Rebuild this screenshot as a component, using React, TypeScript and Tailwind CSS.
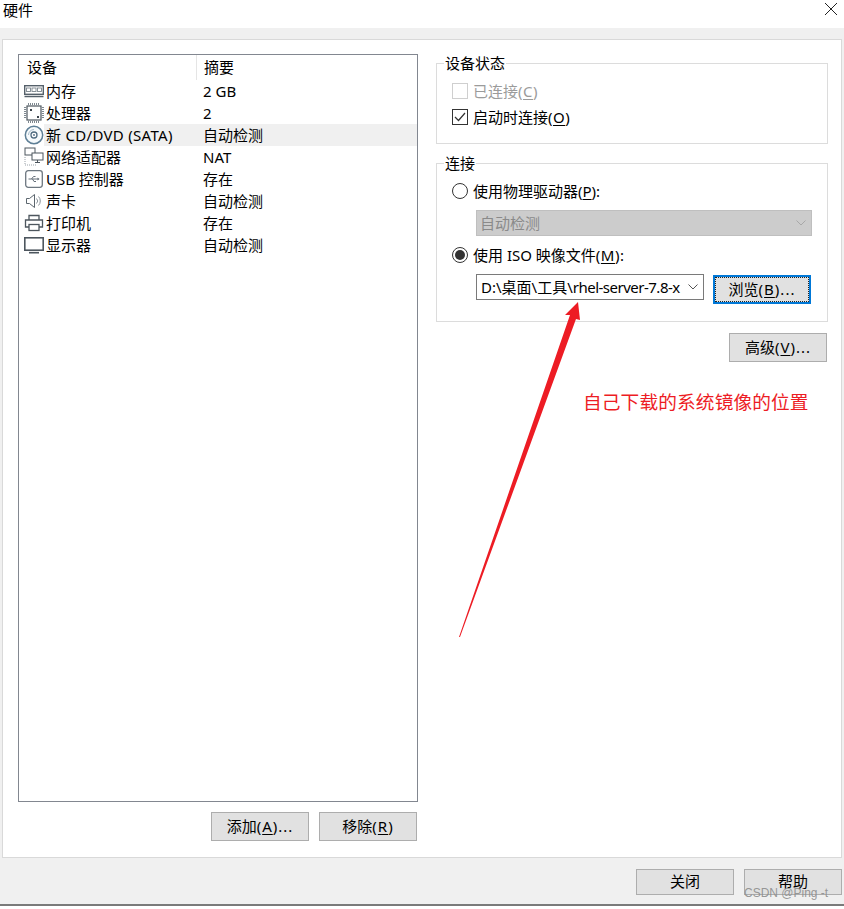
const font = { fontFamily: '"Noto Sans", "Noto Sans CJK SC", sans-serif' };

function RamIcon() {
  return (
    <svg width="20" height="13" viewBox="0 0 20 13" fill="none">
      <rect x="0.7" y="0.7" width="18.6" height="8.6" fill="#fff" stroke="#55606a" strokeWidth="1.4" />
      <rect x="2.5" y="3" width="4" height="3.5" fill="#fff" stroke="#7b858d" strokeWidth="0.9" />
      <rect x="8" y="3" width="4" height="3.5" fill="#fff" stroke="#7b858d" strokeWidth="0.9" />
      <rect x="13.5" y="3" width="4" height="3.5" fill="#fff" stroke="#7b858d" strokeWidth="0.9" />
      <path d="M0.5 11.5h19" stroke="#55606a" strokeWidth="1.5" />
    </svg>
  );
}

function CpuIcon() {
  return (
    <svg width="20" height="20" viewBox="0 0 20 20" fill="none">
      <rect x="3" y="3" width="14" height="14" fill="#fff" stroke="#4d565e" strokeWidth="1.2" />
      <path d="M4.5 0v2.2M6.5 0v2.2M8.5 0v2.2M10.5 0v2.2M12.5 0v2.2M14.5 0v2.2M4.5 17.8v2.2M6.5 17.8v2.2M8.5 17.8v2.2M10.5 17.8v2.2M12.5 17.8v2.2M14.5 17.8v2.2M0 4.5h2.2M0 6.5h2.2M0 8.5h2.2M0 10.5h2.2M0 12.5h2.2M0 14.5h2.2M17.8 4.5h2.2M17.8 6.5h2.2M17.8 8.5h2.2M17.8 10.5h2.2M17.8 12.5h2.2M17.8 14.5h2.2" stroke="#7e8890" />
      <rect x="6" y="6" width="2" height="2" fill="#3c444b" />
      <rect x="13" y="13" width="2" height="2" fill="#3c444b" />
    </svg>
  );
}

function DiscIcon() {
  return (
    <svg width="20" height="20" viewBox="0 0 20 20" fill="none">
      <circle cx="10" cy="10" r="8.7" fill="#f6fafc" stroke="#5e7f96" strokeWidth="1.5" />
      <circle cx="10" cy="10" r="3" fill="#fff" stroke="#4f6b80" strokeWidth="1.3" />
      <circle cx="10" cy="10" r="0.9" fill="#4f6b80" />
      <path d="M4.5 10a5.5 5.5 0 0 1 5.5-5.5" stroke="#a9bccb" />
    </svg>
  );
}

function NetIcon() {
  return (
    <svg width="20" height="20" viewBox="0 0 20 20" fill="none">
      <rect x="1" y="1" width="10" height="7" fill="#fff" stroke="#4d565e" />
      <rect x="8" y="6" width="11" height="7" fill="#fff" stroke="#4d565e" />
      <path d="M13.5 13v2M11 15.5h5" stroke="#4d565e" />
      <path d="M1 10v8h12" stroke="#9aa2a9" strokeDasharray="1 1" />
    </svg>
  );
}

function UsbIcon() {
  return (
    <svg width="18" height="18" viewBox="0 0 18 18" fill="none">
      <rect x="0.7" y="0.7" width="16.6" height="16.6" rx="2.5" fill="#fff" stroke="#6d7780" strokeWidth="1.3" />
      <path d="M3.5 9h10M6.5 9l2-2.5h2M7.5 9l1.5 2.5h2" stroke="#66707a" />
      <path d="M12.5 7.5l2 1.5-2 1.5z" fill="#66707a" />
    </svg>
  );
}

function SpeakerIcon() {
  return (
    <svg width="18" height="16" viewBox="0 0 18 16" fill="none">
      <path d="M1.5 5.5h3l5-4v13l-5-4h-3z" fill="#fff" stroke="#5c666e" />
      <path d="M11.5 5.5a3.5 3.5 0 0 1 0 5M13.5 3.5a6.5 6.5 0 0 1 0 9" stroke="#8b949b" />
    </svg>
  );
}

function PrinterIcon() {
  return (
    <svg width="20" height="18" viewBox="0 0 20 18" fill="none">
      <path d="M5 6V1.5h10V6" fill="#fff" stroke="#4d565e" strokeWidth="1.3" />
      <path d="M5 13H1.5V6h17v7H15" fill="#fff" stroke="#4d565e" strokeWidth="1.3" />
      <rect x="5" y="10.5" width="10" height="6" fill="#fff" stroke="#4d565e" strokeWidth="1.3" />
    </svg>
  );
}

function MonitorIcon() {
  return (
    <svg width="20" height="17" viewBox="0 0 20 17" fill="none">
      <rect x="0.8" y="0.8" width="18.4" height="12.4" fill="#fff" stroke="#4d565e" strokeWidth="1.6" />
      <path d="M5 15.7h10" stroke="#4d565e" strokeWidth="1.6" />
    </svg>
  );
}

function Chevron({ color }: { color: string }) {
  return (
    <svg width="10" height="6" viewBox="0 0 10 6" fill="none">
      <path d="M0.5 0.5L5 5l4.5-4.5" stroke={color} />
    </svg>
  );
}

const devices = [
  { icon: <RamIcon />, name: "内存", summary: "2 GB" },
  { icon: <CpuIcon />, name: "处理器", summary: "2" },
  { icon: <DiscIcon />, name: "新 CD/DVD (SATA)", summary: "自动检测", selected: true },
  { icon: <NetIcon />, name: "网络适配器", summary: "NAT" },
  { icon: <UsbIcon />, name: "USB 控制器", summary: "存在" },
  { icon: <SpeakerIcon />, name: "声卡", summary: "自动检测" },
  { icon: <PrinterIcon />, name: "打印机", summary: "存在" },
  { icon: <MonitorIcon />, name: "显示器", summary: "自动检测" },
];

function WinButton({ children, className }: { children: React.ReactNode; className: string }) {
  return (
    <div className={`w-[98px] pb-[2px] flex items-center justify-center bg-[#e1e1e1] border border-[#adadad] text-[15px] text-black ${className}`}>
      {children}
    </div>
  );
}

export default function App() {
  return (
    <div className="relative w-[844px] h-[909px] bg-white overflow-hidden text-[15px] leading-[20px] text-black" style={font}>
      <div className="h-[28px] flex items-start justify-between pl-[3px] pr-[6px]">
        <span className="text-[15px] leading-[20px]">硬件</span>
        <svg width="14" height="14" viewBox="0 0 14 14" className="mt-[2px]" fill="none">
          <path d="M1 1l12 12M13 1L1 13" stroke="#222" />
        </svg>
      </div>

      <div className="h-[878px] bg-[#f0f0f0] border-b-2 border-[#7a7a7a] pt-[11px] px-[2px]">
        <div className="h-[819px] w-[840px] bg-white border border-[#d9d9d9] flex pt-[14px] pl-[15px]">
          <div className="w-[400px] flex flex-col">
            <div className="h-[748px] border border-[#828790]">
              <div className="flex h-[25px] items-center">
                <div className="w-[178px] pl-[8px] pb-[1px] h-full flex items-center border-r border-[#e5e5e5]">设备</div>
                <div className="pl-[7px] pb-[1px]">摘要</div>
              </div>
              {devices.map((d) => (
                <div key={d.name} className="flex h-[22px] items-center">
                  <div className="w-[25px] pl-[5px] h-full flex items-center justify-center shrink-0">{d.icon}</div>
                  <div className={`flex-1 flex h-full items-center ${d.selected ? "bg-[#f0f0f0]" : ""}`}>
                    <div className={`w-[158px] pl-[2px] whitespace-nowrap ${d.selected ? "tracking-[0.3px]" : ""}`}>{d.name}</div>
                    <div className="pl-[1px]">{d.summary}</div>
                  </div>
                </div>
              ))}
            </div>
            <div className="flex justify-end gap-[10px] mt-[10px] pr-[1px]">
              <WinButton className="h-[29px]">
                <span>添加<span className="tracking-[1px]">(<u className="underline-offset-2">A</u>)...</span></span>
              </WinButton>
              <WinButton className="h-[29px]">
                <span>移除<span className="tracking-[1px]">(<u className="underline-offset-2">R</u>)</span></span>
              </WinButton>
            </div>
          </div>

          <div className="w-[392px] ml-[18px] -mt-[1px]">
            <fieldset className="h-[91px] border border-[#dcdcdc]">
              <legend className="ml-[7px] px-[1px] leading-[20px]">设备状态</legend>
              <div className="pl-[15px] pt-[5px]">
                <div className="flex items-center gap-[5px] h-[26px] text-[#9b9b9b]">
                  <span className="w-[16px] h-[16px] border border-[#cfcfcf] bg-white" />
                  <span>已连接<span className="tracking-[0.5px]">(<u className="underline-offset-2">C</u>)</span></span>
                </div>
                <div className="flex items-center gap-[5px] h-[26px]">
                  <span className="w-[16px] h-[16px] border border-[#333] bg-white flex items-center justify-center">
                    <svg width="12" height="10" viewBox="0 0 12 10" fill="none">
                      <path d="M1 5l3.5 3.5L11 1" stroke="#333" strokeWidth="1.2" />
                    </svg>
                  </span>
                  <span>启动时连接<span className="tracking-[0.5px]">(<u className="underline-offset-2">O</u>)</span></span>
                </div>
              </div>
            </fieldset>

            <fieldset className="h-[169px] mt-[9px] border border-[#dcdcdc]">
              <legend className="ml-[7px] px-[1px] leading-[20px]">连接</legend>
              <div className="pl-[15px] pt-[5px]">
                <div className="flex items-center gap-[5px] h-[26px]">
                  <span className="w-[16px] h-[16px] rounded-full border border-[#333] bg-white" />
                  <span>使用物理驱动器(<u className="underline-offset-2">P</u>):</span>
                </div>
                <div className="ml-[24px] mt-[6px] w-[336px] h-[26px] bg-[#cccccc] border border-[#bfbfbf] flex items-center justify-between pl-[3px] pr-[5px] text-[#8a8a8a]">
                  <span>自动检测</span>
                  <Chevron color="#a8a8a8" />
                </div>
                <div className="flex items-center gap-[5px] h-[26px] mt-[6px]">
                  <span className="w-[16px] h-[16px] rounded-full border border-[#333] bg-white flex items-center justify-center">
                    <span className="w-[10px] h-[10px] rounded-full bg-[#333]" />
                  </span>
                  <span>使用 ISO 映像文件<span className="tracking-[0.5px]">(<u className="underline-offset-2">M</u>):</span></span>
                </div>
                <div className="flex items-start ml-[24px] mt-[6px]">
                  <div className="w-[228px] h-[26px] border border-[#7a7a7a] bg-white flex items-center pl-[4px] pr-[5px] justify-between">
                    <span className="whitespace-nowrap">D:\桌面\工具\<span className="tracking-[-0.5px]">rhel-server-7.8-x</span></span>
                    <Chevron color="#555" />
                  </div>
                  <div className="ml-[9px] mt-[1px] w-[98px] h-[29px] bg-[#e1e1e1] border-2 border-[#0078d7] flex items-center justify-center">
                    <span className="w-full h-full border border-dotted border-[#222] pb-[1px] flex items-center justify-center">
                      <span>浏览<span className="tracking-[1px]">(<u className="underline-offset-2">B</u>)...</span></span>
                    </span>
                  </div>
                </div>
              </div>
            </fieldset>

            <div className="flex justify-end mt-[11px] pr-[1px]">
              <WinButton className="h-[29px]">
                <span>高级<span className="tracking-[1px]">(<u className="underline-offset-2">V</u>)...</span></span>
              </WinButton>
            </div>
            <div className="mt-[28px] ml-[147px] text-[18.67px] tracking-[0.15px] leading-[24px] text-[#ed1c24] whitespace-nowrap">自己下载的系统镜像的位置</div>
          </div>
        </div>
        <div className="flex justify-end gap-[10px] mt-[11px]">
          <WinButton className="h-[26px]">关闭</WinButton>
          <WinButton className="h-[26px]">帮助</WinButton>
        </div>
      </div>

      <svg className="absolute left-[450px] top-[295px] pointer-events-none" width="140" height="350" viewBox="0 0 140 350" fill="none">
        <path d="M9 342L120 20L115 20L128 7L130 25L126 24L10 342Z" fill="#ed1c24" />
      </svg>

      <span className="absolute left-[744px] top-[885px] text-[12px] leading-[16px] text-[#8c8c8c]/90 whitespace-nowrap" style={{ fontFamily: '"Liberation Sans", sans-serif' }}>
        CSDN @Ping -t
      </span>
    </div>
  );
}
